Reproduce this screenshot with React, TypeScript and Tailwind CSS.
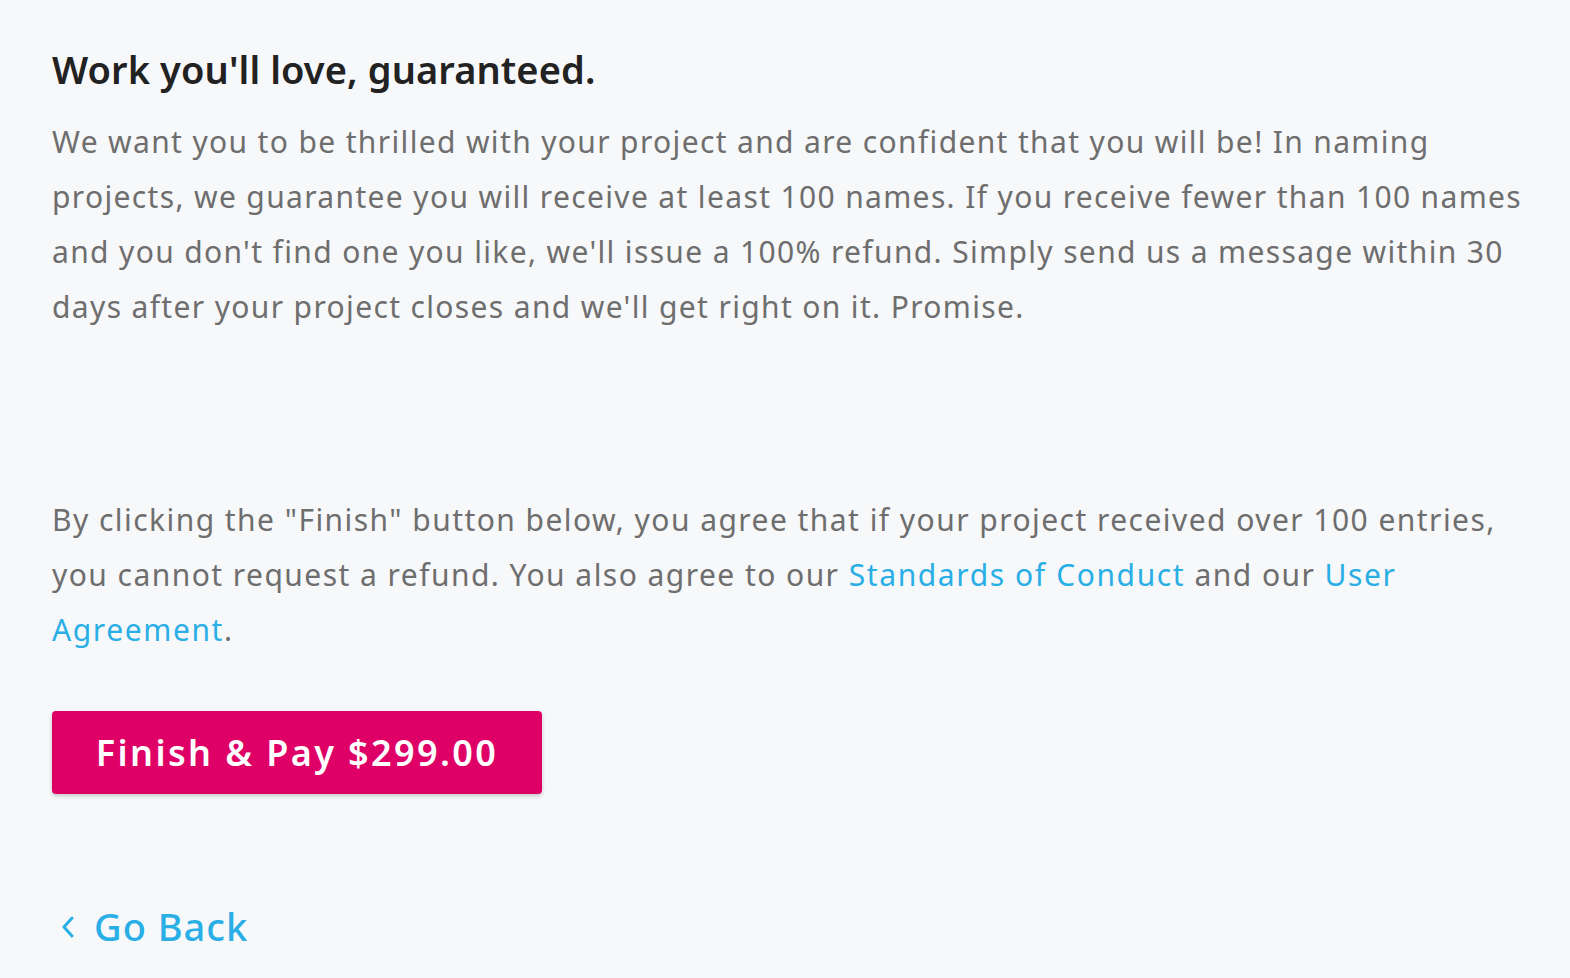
export default function App() {
  return (
    <div
      className="min-h-[978px] w-full bg-[#f7f8fa] pl-[52px] pr-[20px] pt-[42px]"
      style={{ fontFamily: '"Noto Sans", "Open Sans", sans-serif' }}
    >
      <h2 className="text-[38px] leading-[54px] font-semibold tracking-[0.1px] text-[#222222]">
        Work you'll love, guaranteed.
      </h2>
      <p className="mt-[18px] text-[30px] leading-[55px] tracking-[1.35px] text-[#6e6e6e]">
        We want you to be thrilled with your project and are confident that you will be! In naming
        <br />
        projects, we guarantee you will receive at least 100 names. If you receive fewer than 100 names
        <br />
        and you don't find one you like, we'll issue a 100% refund. Simply send us a message within 30
        <br />
        days after your project closes and we'll get right on it. Promise.
      </p>
      <p className="mt-[158px] text-[30px] leading-[55px] tracking-[1.45px] text-[#6e6e6e]">
        By clicking the "Finish" button below, you agree that if your project received over 100 entries,
        <br />
        you cannot request a refund. You also agree to our{" "}
        <a href="#" className="text-[#29aee6] tracking-[1.6px]">Standards of Conduct</a> and our{" "}
        <a href="#" className="text-[#29aee6] tracking-[1.6px]">User</a>
        <br />
        <a href="#" className="text-[#29aee6] tracking-[1.6px]">Agreement</a>.
      </p>
      <button className="mt-[54px] flex h-[83px] w-[490px] items-center justify-center rounded-[4px] bg-[#de0067] text-[36px] font-semibold tracking-[2.4px] text-white shadow-[0_2px_4px_rgba(0,0,0,0.2)]">
        Finish &amp; Pay $299.00
      </button>
      <a href="#" className="mt-[104px] flex items-center gap-[20px] text-[38px] font-medium tracking-[1px] text-[#29aee6]">
        <svg width="14" height="26" viewBox="0 0 14 26" fill="none" className="ml-[8px]">
          <path d="M12 4 L4 13 L12 22" stroke="currentColor" strokeWidth="3" strokeLinecap="round" strokeLinejoin="round" />
        </svg>
        Go Back
      </a>
    </div>
  );
}
